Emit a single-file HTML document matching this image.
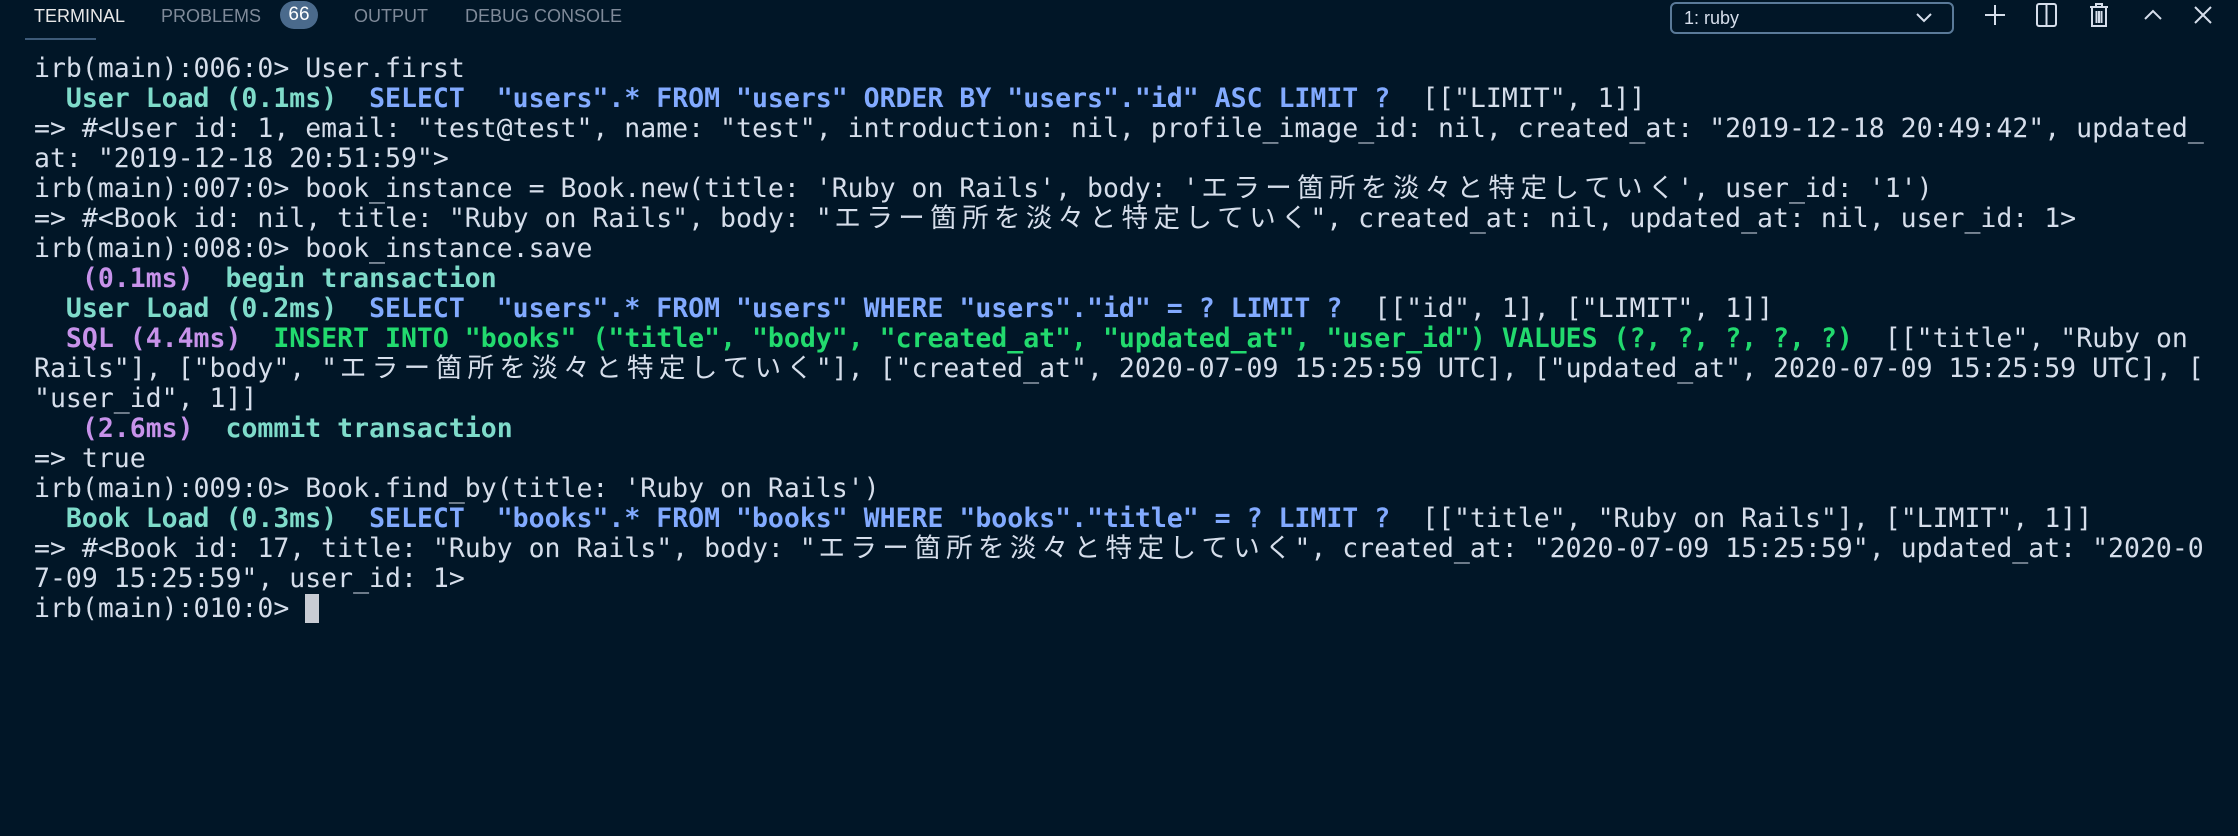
<!DOCTYPE html>
<html><head><meta charset="utf-8"><style>
body{margin:0;width:2238px;height:836px;background:#011627;overflow:hidden;position:relative;font-family:"Liberation Sans",sans-serif}
.tab{position:absolute;top:4px;font-size:18px;color:#7f8a99;line-height:24px}
.badge{position:absolute;left:280px;top:1px;width:38px;height:28px;border-radius:14px;background:#4a6a8c;color:#fff;font-size:19px;text-align:center;line-height:28px}
pre{position:absolute;left:34px;top:54px;margin:0;font-family:"DejaVu Sans Mono","Noto Sans CJK JP",monospace;font-size:26.5px;line-height:30px;color:#d6deeb}
.t{color:#7fdbca;font-weight:bold}.b{color:#82aaff;font-weight:bold}.p{color:#c792ea;font-weight:bold}.g{color:#22da6e;font-weight:bold}
.j i{font-style:normal;display:inline-block;width:2ch;text-align:center}
.cur{display:inline-block;width:14px;height:29px;background:#c8ccd4;vertical-align:-6px}
.drop{position:absolute;left:1670px;top:2px;width:280px;height:28px;border:2px solid #5a7a99;border-radius:6px;color:#d6deeb;font-size:18px;line-height:28px}
svg{position:absolute}
</style></head><body>
<div class="tab" style="left:34px;color:#e8e8e8">TERMINAL</div>
<div style="position:absolute;left:25px;top:38px;width:71px;height:2px;background:#3d5a78"></div>
<div class="tab" style="left:161px">PROBLEMS</div>
<div class="badge">66</div>
<div class="tab" style="left:354px">OUTPUT</div>
<div class="tab" style="left:465px">DEBUG CONSOLE</div>
<div class="drop"><span style="margin-left:12px">1: ruby</span>
<svg style="left:243px;top:8px" width="18" height="12" viewBox="0 0 18 12"><path d="M2 2l7 7 7-7" stroke="#d6deeb" stroke-width="2" fill="none"/></svg></div>
<svg style="left:1984px;top:4px" width="22" height="22"><path d="M11 1v20M1 11h20" stroke="#d6deeb" stroke-width="2"/></svg>
<svg style="left:2036px;top:3px" width="22" height="24"><rect x="1" y="1" width="19" height="22" rx="2" stroke="#d6deeb" stroke-width="2" fill="none"/><path d="M10.5 1v22" stroke="#d6deeb" stroke-width="2"/></svg>
<svg style="left:2089px;top:2px" width="20" height="26"><path d="M1 5h18M7 5V2h6v3M3 6v18h14V6M7.5 9v12M10 9v12M12.5 9v12" stroke="#d6deeb" stroke-width="2" fill="none"/></svg>
<svg style="left:2143px;top:8px" width="20" height="14"><path d="M2 11l8-8 8 8" stroke="#d6deeb" stroke-width="2" fill="none"/></svg>
<svg style="left:2193px;top:5px" width="20" height="20"><path d="M2 2l16 16M18 2L2 18" stroke="#d6deeb" stroke-width="2"/></svg>
<pre>irb(main):006:0&gt; User.first
  <span class="t">User Load (0.1ms)</span>  <span class="b">SELECT  "users".* FROM "users" ORDER BY "users"."id" ASC LIMIT ?</span>  [["LIMIT", 1]]
=&gt; #&lt;User id: 1, email: "test@test", name: "test", introduction: nil, profile_image_id: nil, created_at: "2019-12-18 20:49:42", updated_
at: "2019-12-18 20:51:59"&gt;
irb(main):007:0&gt; book_instance = Book.new(title: 'Ruby on Rails', body: '<span class="j"><i>エ</i><i>ラ</i><i>ー</i><i>箇</i><i>所</i><i>を</i><i>淡</i><i>々</i><i>と</i><i>特</i><i>定</i><i>し</i><i>て</i><i>い</i><i>く</i></span>', user_id: '1')
=&gt; #&lt;Book id: nil, title: "Ruby on Rails", body: "<span class="j"><i>エ</i><i>ラ</i><i>ー</i><i>箇</i><i>所</i><i>を</i><i>淡</i><i>々</i><i>と</i><i>特</i><i>定</i><i>し</i><i>て</i><i>い</i><i>く</i></span>", created_at: nil, updated_at: nil, user_id: 1&gt;
irb(main):008:0&gt; book_instance.save
   <span class="p">(0.1ms)</span>  <span class="t">begin transaction</span>
  <span class="t">User Load (0.2ms)</span>  <span class="b">SELECT  "users".* FROM "users" WHERE "users"."id" = ? LIMIT ?</span>  [["id", 1], ["LIMIT", 1]]
  <span class="p">SQL (4.4ms)</span>  <span class="g">INSERT INTO "books" ("title", "body", "created_at", "updated_at", "user_id") VALUES (?, ?, ?, ?, ?)</span>  [["title", "Ruby on
Rails"], ["body", "<span class="j"><i>エ</i><i>ラ</i><i>ー</i><i>箇</i><i>所</i><i>を</i><i>淡</i><i>々</i><i>と</i><i>特</i><i>定</i><i>し</i><i>て</i><i>い</i><i>く</i></span>"], ["created_at", 2020-07-09 15:25:59 UTC], ["updated_at", 2020-07-09 15:25:59 UTC], [
"user_id", 1]]
   <span class="p">(2.6ms)</span>  <span class="t">commit transaction</span>
=&gt; true
irb(main):009:0&gt; Book.find_by(title: 'Ruby on Rails')
  <span class="t">Book Load (0.3ms)</span>  <span class="b">SELECT  "books".* FROM "books" WHERE "books"."title" = ? LIMIT ?</span>  [["title", "Ruby on Rails"], ["LIMIT", 1]]
=&gt; #&lt;Book id: 17, title: "Ruby on Rails", body: "<span class="j"><i>エ</i><i>ラ</i><i>ー</i><i>箇</i><i>所</i><i>を</i><i>淡</i><i>々</i><i>と</i><i>特</i><i>定</i><i>し</i><i>て</i><i>い</i><i>く</i></span>", created_at: "2020-07-09 15:25:59", updated_at: "2020-0
7-09 15:25:59", user_id: 1&gt;
irb(main):010:0&gt; <span class="cur"></span></pre>
</body></html>
